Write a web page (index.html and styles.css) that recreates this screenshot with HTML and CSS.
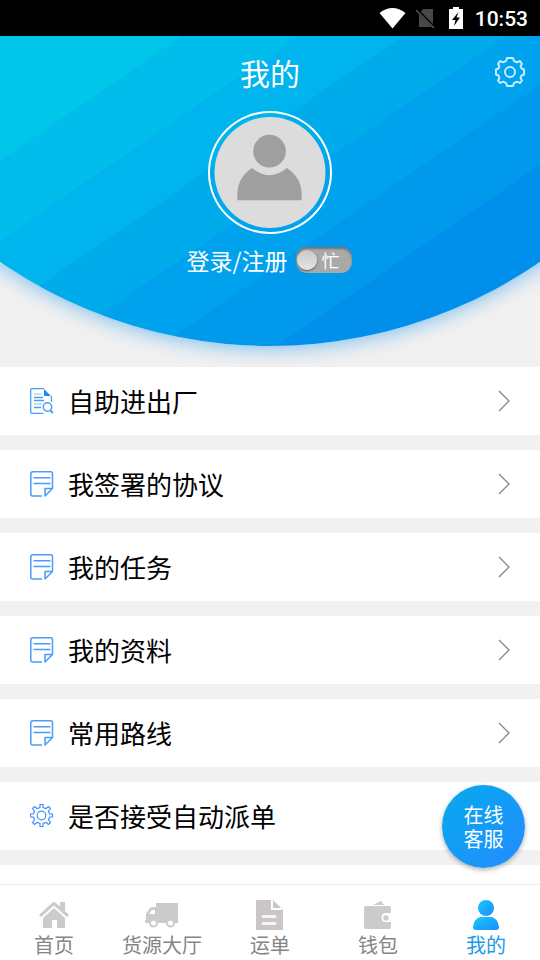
FILE: index.html
```html
<!DOCTYPE html>
<html lang="zh-CN">
<head>
<meta charset="utf-8">
<meta name="viewport" content="width=device-width, initial-scale=1">
<title>我的</title>
<link rel="stylesheet" href="styles.css">
</head>
<body>
<svg class="defs" aria-hidden="true">
  <defs>
    <linearGradient id="blue" x1="0" y1="0" x2="1" y2="1"><stop offset="0" stop-color="#18c8ff"/><stop offset="1" stop-color="#1e8cff"/></linearGradient>
    <symbol id="note" viewBox="0 0 24 26">
      <path d="M12 25H2.500Q.8 25 .8 23V3Q.8 .8 3 .8H21Q22.500 .8 22.500 3V17.500L15 25V17.500H22.500M3.500 6.700H20.500M3.500 12.500H20.500" fill="none" stroke="#4a9bfc" stroke-width="1.500" stroke-linejoin="round"/>
    </symbol>
    <symbol id="chevron" viewBox="0 0 12 22">
      <path d="M1 1L11 11L1 21" fill="none" stroke="#858585" stroke-width="1.300"/>
    </symbol>
  </defs>
</svg>
<div class="status">
  <svg width="27" height="21" viewBox="0 0 27 21"><path d="M.5 5Q13.500-5 26.500 5L13.500 20.500Z" fill="#fff"/></svg>
  <svg width="20" height="21" viewBox="0 0 20 21"><path d="M7 1H17V19H3V6Z" fill="#484848"/><path d="M1 2L19 20" stroke="#000" stroke-width="3"/><path d="M0 2L18 20" stroke="#545454" stroke-width="1.500"/></svg>
  <svg width="14" height="22" viewBox="0 0 14 22"><path d="M0 2H4V0H10V2H14V22H0Z" fill="#fff"/><path d="M9.500 5L3 13H6.500L5 19L11 10.500H7.500Z" fill="#000"/></svg>
  <time>10:53</time>
</div>
<header class="hero">
  <div class="bar">
    <h1>我的</h1>
    <button class="settings" aria-label="设置">
      <svg width="30" height="30" viewBox="0 0 30 30" fill="none" stroke="#c5edff" stroke-width="2" stroke-linejoin="round"><path d="M12 1H18L19 4L22 5.300L25 4L27 7L25.500 9L26.500 11.500L29 12.500V17.500L26.500 18.500L25.500 21L27 23.500L25 26L22 24.700L19 26L18 29H12L11 26L8 24.700L5 26L3 23.500L4.500 21L3.500 18.500L1 17.500V12.500L3.500 11.500L4.500 9L3 7L5 4L8 5.300L11 4Z"/><circle cx="15" cy="15" r="5"/></svg>
    </button>
  </div>
  <div class="avatar">
    <svg viewBox="0 0 112 112"><circle cx="56" cy="56" r="56" fill="#dcdcdc"/><circle cx="55.500" cy="34.500" r="16.500" fill="#9f9f9f"/><path d="M23 84V79Q23 61 38 51.500Q55.500 66 73 51.500Q88 61 88 79V84Z" fill="#9f9f9f"/></svg>
  </div>
  <div class="login">
    <a href="#login">登录/注册</a>
    <button class="switch" role="switch" aria-checked="false"><span class="knob"></span>忙</button>
  </div>
</header>
<main class="menu">
  <a class="row" href="#gate">
    <svg class="icon" viewBox="0 0 24 26" fill="none" stroke="#4a9cfb"><path d="M14 .7H2Q.7 .7 .7 2V24Q.7 25.300 2 25.300H13M21.500 8V14M4 9.500H13M4 12.500H14M4 19.500H11" stroke-width="1.300"/><path d="M4 6H12M4 16H12" stroke="#c4defc" stroke-width="2"/><path d="M14 1V8H21Z" fill="#2487f5" stroke="none"/><circle cx="17.500" cy="19" r="4.200" stroke-width="1.500"/><path d="M20.500 22.500L23 25" stroke-width="2"/></svg>
    <span>自助进出厂</span><svg class="arrow"><use href="#chevron"/></svg></a>
  <a class="row" href="#agreements"><svg class="icon"><use href="#note"/></svg><span>我签署的协议</span><svg class="arrow"><use href="#chevron"/></svg></a>
  <a class="row" href="#tasks"><svg class="icon"><use href="#note"/></svg><span>我的任务</span><svg class="arrow"><use href="#chevron"/></svg></a>
  <a class="row" href="#profile"><svg class="icon"><use href="#note"/></svg><span>我的资料</span><svg class="arrow"><use href="#chevron"/></svg></a>
  <a class="row" href="#routes"><svg class="icon"><use href="#note"/></svg><span>常用路线</span><svg class="arrow"><use href="#chevron"/></svg></a>
  <a class="row" href="#dispatch">
    <svg class="icon" viewBox="0 0 24 26" fill="none" stroke="#3c92fb" stroke-width="1.200"><path d="M10 1.500H13V4.500L16 5.500L18.500 3.500L20.500 5.500L18.500 8L19.500 11H22.500V14H19.500L18.500 17L20.500 19.500L18.500 21.500L16 19.500L13 20.500V23.500H10V20.500L7 19.500L4.500 21.500L2.500 19.500L4.500 17L3.500 14H.5V11H3.500L4.500 8L2.500 5.500L4.500 3.500L7 5.500L10 4.500Z"/><circle cx="11.500" cy="12.500" r="4.300"/></svg>
    <span>是否接受自动派单</span></a>
  <div class="row"></div>
</main>
<div class="dock">
  <button class="service"><span>在线</span><span>客服</span></button>
  <nav class="tabs">
    <a href="#home"><svg width="30" height="30" viewBox="0 0 30 30" fill="#cbcbcb"><path d="M0 15L13 3Q15 1 17 3L21 6.500V2H26V11L30 15L28 17L15 5.500L2 17Z"/><path d="M15 8L26 18V28H18V20H13V28H4V18Z"/></svg>首页</a>
    <a href="#cargo"><svg width="34" height="30" viewBox="0 0 34 30" fill="#cbcbcb"><path d="M11 3H33V23H30A5 5 0 0 0 21 23H13A5 5 0 0 0 4 23H0V20H1V14L5 8Q6 7 11 7Z"/><path d="M4 14L7 10H10V14Z" fill="#fff"/><circle cx="8.500" cy="23" r="3.500" fill="none" stroke="#cbcbcb" stroke-width="2"/><circle cx="25.500" cy="23" r="3.500" fill="none" stroke="#cbcbcb" stroke-width="2"/></svg>货源大厅</a>
    <a href="#orders"><svg width="28" height="30" viewBox="0 0 28 30"><path d="M0 0H17L27 10V30H0Z" fill="#cac6c6"/><path d="M16 0V9H26" fill="none" stroke="#fff" stroke-width="2"/><path d="M7 16.500H19M7 23.500H19" fill="none" stroke="#f7f6f6" stroke-width="3" stroke-linecap="round"/></svg>运单</a>
    <a href="#wallet"><svg width="28" height="30" viewBox="0 0 28 30" fill="#cbcbcb"><path d="M9 5Q13 3 17 1L20 5ZM2 6H25Q27 6 27 8V13H22Q17.500 13 17.500 17.500T22 22H27V27Q27 29 25 29H2Q0 29 0 27V8Q0 6 2 6Z"/><circle cx="22" cy="18" r="2.700"/></svg>钱包</a>
    <a class="active" href="#me"><svg width="26" height="30" viewBox="0 0 26 30" fill="url(#blue)"><circle cx="13" cy="8" r="8"/><path d="M7 17H19Q25 19 26 27Q26 30 23 30H3Q0 30 0 27Q1 19 7 17Z"/></svg>我的</a>
  </nav>
</div>
</body>
</html>
```
FILE: styles.css
```css
* { box-sizing: border-box; }
html { height: 100%; overflow: hidden; }
body {
  margin: 0;
  height: 100%;
  overflow: hidden;
  display: flex;
  flex-direction: column;
  background: #f1f1f1;
  color: #000;
  font-family: "Noto Sans CJK SC", sans-serif;
}
a { color: inherit; text-decoration: none; }
button { border: 0; padding: 0; background: none; color: inherit; font-family: inherit; }
svg { display: block; flex: none; }
.defs { position: absolute; width: 0; height: 0; }

.status {
  flex: none;
  height: 36px;
  padding-right: 12px;
  display: flex;
  align-items: center;
  justify-content: flex-end;
  background: #000;
  color: #fff;
  font: 500 21px/36px Roboto, sans-serif;
  z-index: 1;
}
.status svg + svg { margin-left: 10px; }
.status svg:nth-of-type(3) { margin-left: 13px; }
.status time { margin-left: 12px; padding-top: 2px; }

.hero {
  flex: none;
  position: relative;
  overflow: hidden;
  color: #fff;
  padding-bottom: 90px;
}
.hero::before {
  content: "";
  position: absolute;
  bottom: 21px;
  left: -38%;
  width: 176%;
  aspect-ratio: 1;
  border-radius: 50%;
  background: linear-gradient(145.5deg,
    #00c6ea 56.5%, #00bdec 56.5% 61.5%, #00b4ed 61.5% 66%, #00abec 66% 70.4%,
    #00a2ed 70.4% 74.9%, #0099ec 74.9% 79.9%, #0090eb 79.9%);
  box-shadow: 0 2px 20px rgba(0, 140, 240, 0.5);
}
.bar {
  position: relative;
  height: 75px;
  display: grid;
  grid-template-columns: 1fr auto 1fr;
  align-items: center;
  padding: 0 15px 3px;
}
.bar h1 { grid-column: 2; margin: 0; font-size: 30px; font-weight: 400; line-height: 44px; }
.settings { justify-self: end; }
.avatar {
  position: relative;
  width: 124px;
  height: 123px;
  margin: 0 auto;
  padding: 4px;
  border: 2px solid #fff;
  border-radius: 50%;
}
.avatar svg { width: 100%; height: 100%; }
.login {
  position: relative;
  display: flex;
  align-items: center;
  justify-content: center;
  gap: 8px;
  height: 38px;
  margin-top: 5px;
  padding: 4px 2px 0 0;
  font-size: 23px;
}
.login a { padding-bottom: 1px; }
.switch {
  width: 56px;
  height: 26px;
  padding: 0 12px 0 1px;
  display: flex;
  align-items: center;
  justify-content: space-between;
  border-radius: 11px;
  background: #a9a9a9;
  box-shadow: inset 0 2px 2px #747474;
  font-size: 18px;
  line-height: 24px;
}
.knob {
  width: 20px;
  height: 20px;
  border-radius: 50%;
  background: linear-gradient(#c9c9c9, #e4e4e4);
  box-shadow: 0 1px 2px #555;
}

.menu {
  flex: 1;
  min-height: 0;
  overflow: hidden;
  display: flex;
  flex-direction: column;
  gap: 15px;
}
.row {
  flex: none;
  height: 68px;
  padding: 0 30px;
  display: flex;
  align-items: center;
  gap: 14px;
  background: #fff;
  font-size: 26px;
}
.row span { padding-bottom: 2px; }
.icon { width: 24px; height: 26px; }
.arrow { width: 12px; height: 22px; margin-left: auto; }

.dock { flex: none; position: relative; }
.service {
  position: absolute;
  right: 15px;
  bottom: 92px;
  width: 83px;
  height: 83px;
  border-radius: 50%;
  background: linear-gradient(135deg, #05aaed, #248cff);
  box-shadow: 0 2px 5px rgba(0, 0, 0, 0.3);
  color: #fff;
  font-size: 20px;
  line-height: 24px;
}
.service span { display: block; }
.tabs {
  height: 76px;
  padding-top: 15px;
  display: grid;
  grid-template-columns: repeat(5, 1fr);
  border-top: 1px solid #ececec;
  background: #fff;
}
.tabs a {
  display: flex;
  flex-direction: column;
  align-items: center;
  color: #858585;
  font-size: 20px;
  line-height: 30px;
}
.tabs .active { color: #1c9aeb; }
```
